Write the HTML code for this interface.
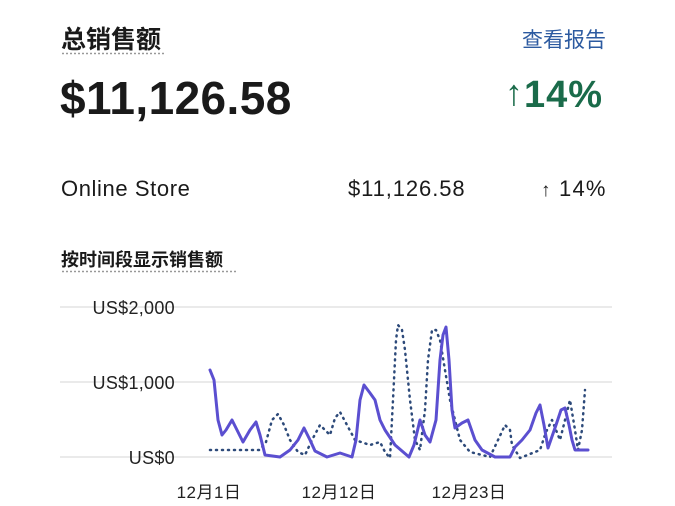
<!DOCTYPE html>
<html><head><meta charset="utf-8"><style>
body{margin:0;width:675px;height:506px;background:#fff;font-family:"Liberation Sans","Noto Sans CJK SC",sans-serif;color:#1a1a1a;position:relative;overflow:hidden}
.a{position:absolute;white-space:nowrap}
.dot{background-image:radial-gradient(circle,#999 0.8px,transparent 1px);background-size:4px 3px;background-repeat:repeat-x;height:3px}
</style></head><body>
<div class="a" style="left:61px;top:20px;font-size:25px;font-weight:bold">总销售额</div>
<div class="dot a" style="left:61px;top:52px;width:104px"></div>
<div class="a" style="left:522px;top:24px;font-size:21px;color:#2c5aa0">查看报告</div>
<div class="a" style="left:60px;top:71px;font-size:46px;font-weight:bold;letter-spacing:0.4px">$11,126.58</div>
<div class="a" style="left:505px;top:74px;font-size:38px;font-weight:bold;color:#1a6b4a;letter-spacing:1px"><span style="font-size:36px;position:relative;top:-2px;font-weight:bold">↑</span>14%</div>
<div class="a" style="left:61px;top:176px;font-size:22px;letter-spacing:0.6px">Online Store</div>
<div class="a" style="left:348px;top:176px;font-size:22px;letter-spacing:0.9px">$11,126.58</div>
<div class="a" style="left:541px;top:176px;font-size:22px;letter-spacing:1.2px"><span style="font-size:19px">↑</span>&nbsp;14%</div>
<div class="a" style="left:61px;top:246px;font-size:18px;font-weight:bold">按时间段显示销售额</div>
<div class="dot a" style="left:61px;top:270px;width:175px"></div>
<svg class="a" style="left:0;top:0" width="675" height="506">
<g stroke="#e4e4e4" stroke-width="1.5"><line x1="60" y1="307" x2="612" y2="307"/><line x1="60" y1="382" x2="612" y2="382"/><line x1="60" y1="457" x2="612" y2="457"/></g>
<g font-family="Liberation Sans,sans-serif" font-size="18" fill="#222" text-anchor="end" letter-spacing="0.3"><text x="175" y="314">US$2,000</text><text x="175" y="389">US$1,000</text><text x="175" y="464">US$0</text></g>
<g font-family="Liberation Sans,Noto Sans CJK SC,sans-serif" font-size="17" fill="#222" text-anchor="middle" letter-spacing="0.5"><text x="209" y="498">12月1日</text><text x="339" y="498">12月12日</text><text x="469" y="498">12月23日</text></g>
<polyline fill="none" stroke="#2d4a7a" stroke-width="2.5" stroke-dasharray="1 5" stroke-linecap="round" stroke-linejoin="round" points="210,450 260,450 266,442 272,420 278,414 284,425 290,440 298,452 305,455 312,440 320,425 330,435 335,418 340,412 347,425 355,440 370,445 380,442 385,452 390,458 393,400 396,340 398,325 402,330 405,350 410,400 415,440 420,450 425,410 428,360 432,330 436,330 440,340 445,370 450,400 460,440 470,452 490,457 498,440 505,425 510,430 512,445 520,458 540,450 546,432 552,420 560,440 565,420 570,400 575,430 578,450 582,430 585,390"/>
<polyline fill="none" stroke="#5b4fd0" stroke-width="3" stroke-linecap="round" stroke-linejoin="round" points="210,370 214,380 218,420 222,435 226,430 232,420 238,432 243,442 250,430 256,422 260,435 265,455 280,457 290,450 298,440 304,428 310,440 315,451 327,457 340,453 352,457 356,440 360,400 364,385 370,393 375,400 380,420 385,430 395,445 409,457 414,445 420,420 425,435 430,442 436,420 440,360 443,335 446,327 449,360 452,410 455,428 462,423 468,420 475,440 482,450 495,457 510,457 515,447 522,440 530,430 536,413 540,405 544,425 548,448 556,425 561,410 565,408 569,425 572,440 575,450 588,450"/>
</svg>
</body></html>
